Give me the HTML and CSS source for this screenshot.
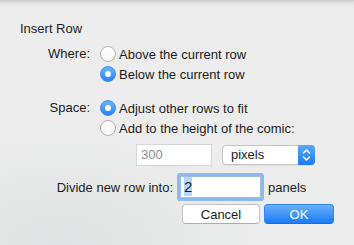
FILE: index.html
```html
<!DOCTYPE html>
<html lang="en">
<head>
    <meta charset="UTF-8">
    <title>Insert Row</title>
    <link rel="stylesheet" href="styles.css">
</head>
<body>
    <div class="sheet">
        <div class="title">Insert Row</div>

        <div class="group where">
            <div class="label">Where:</div>
            <div class="options">
                <label class="radio"><span class="dot"></span>Above the current row</label>
                <label class="radio checked"><span class="dot"></span>Below the current row</label>
            </div>
        </div>

        <div class="group space">
            <div class="label">Space:</div>
            <div class="options">
                <label class="radio checked"><span class="dot"></span>Adjust other rows to fit</label>
                <label class="radio"><span class="dot"></span>Add to the height of the comic:</label>
            </div>
        </div>

        <div class="size-row">
            <div class="field disabled">300</div>
            <div class="popup">
                <span class="popup-value">pixels</span>
                <span class="stepper">
                    <svg width="9" height="14" viewBox="0 0 9 14">
                        <path d="M1.5 5 L4.5 2 L7.5 5 M1.5 9 L4.5 12 L7.5 9" fill="none" stroke="#fff" stroke-width="1.4" stroke-linecap="round" stroke-linejoin="round"/>
                    </svg>
                </span>
            </div>
        </div>

        <div class="divide-row">
            <span class="divide-label">Divide new row into:</span>
            <div class="field focused"><span class="sel">2</span></div>
            <span>panels</span>
        </div>

        <div class="buttons">
            <button class="btn">Cancel</button>
            <button class="btn primary">OK</button>
        </div>
    </div>
</body>
</html>
```

FILE: styles.css
```css
* {
    margin: 0;
    padding: 0;
    box-sizing: border-box;
}

body {
    width: 354px;
    height: 245px;
    overflow: hidden;
    font-family: "Liberation Sans", Arial, sans-serif;
    font-size: 13px;
    color: #1c1c1c;
    background:
        linear-gradient(to bottom, #c9c9c9 0, #dcdcdc 2px, #e9e9e9 5px, rgba(236, 236, 236, 0) 9px),
        radial-gradient(ellipse 220px 120px at 60px 245px, #e0e3e3 0%, rgba(236, 236, 236, 0) 100%),
        #ededed;
}

.sheet {
    padding-top: 21px;
}

.title {
    line-height: 16px;
    padding-left: 20px;
}

.group {
    display: flex;
    margin-top: 7px;
}

.group.space {
    margin-top: 14px;
}

.label {
    width: 90px;
    text-align: right;
    line-height: 20px;
    margin-right: 10px;
}

.options {
    display: flex;
    flex-direction: column;
}

.radio {
    display: flex;
    align-items: center;
    height: 20px;
}

.dot {
    width: 16px;
    height: 16px;
    border-radius: 50%;
    margin-right: 3px;
    border: 1px solid #b3b3b3;
    background: linear-gradient(#ffffff, #f6f6f6);
    display: flex;
    align-items: center;
    justify-content: center;
}

.radio.checked .dot {
    border-color: #3a8af0;
    background: linear-gradient(#6cb3fa, #2a86f6);
}

.radio.checked .dot::after {
    content: '';
    width: 6px;
    height: 6px;
    border-radius: 50%;
    background: #fff;
}

.size-row {
    display: flex;
    align-items: center;
    margin-top: 6px;
    margin-left: 136px;
    gap: 10px;
}

.field {
    height: 22px;
    line-height: 20px;
    padding-left: 4px;
    background: #fff;
    border: 1px solid #c4c4c4;
    border-top-color: #b0b0b0;
}

.size-row .field {
    width: 76px;
}

.field.disabled {
    color: #8a8a8a;
    border-color: #d6d6d6;
}

.popup {
    display: flex;
    width: 93px;
    height: 20px;
    background: #fff;
    border: 1px solid #c6c6c6;
    border-radius: 4px;
    box-shadow: 0 1px 0 rgba(0, 0, 0, 0.06);
}

.popup-value {
    flex: 1;
    line-height: 18px;
    padding-left: 8px;
}

.stepper {
    width: 17px;
    margin: -1px -1px -1px 0;
    border-radius: 0 4px 4px 0;
    background: linear-gradient(#5aa8f9, #1b7cf5);
    display: flex;
    align-items: center;
    justify-content: center;
}

.divide-row {
    display: flex;
    align-items: center;
    margin-top: 10px;
    margin-left: 50px;
}

.divide-label {
    width: 123px;
    text-align: right;
}

.divide-row .field {
    width: 81px;
    margin: 0 7px 0 7px;
    border-color: #9cbde8;
    box-shadow: 0 0 0 3px #8db9ee;
    border-radius: 1px;
    font-size: 15px;
    padding-left: 3px;
}

.sel {
    background: #b4d5fe;
    padding: 1px 0;
}

.buttons {
    display: flex;
    justify-content: flex-end;
    gap: 4px;
    margin-top: 6px;
    padding-right: 20px;
}

.btn {
    font-family: "Liberation Sans", Arial, sans-serif;
    font-size: 13px;
    width: 78px;
    height: 20px;
    background: #fff;
    color: #1c1c1c;
    border: 1px solid #c5c5c5;
    border-bottom-color: #adadad;
    border-radius: 4px;
}

.btn.primary {
    width: 70px;
    color: #fff;
    border-color: #2f86f0;
    border-bottom-color: #1a6ad8;
    background: linear-gradient(#6ab1fa, #1a7bf5);
}
```
